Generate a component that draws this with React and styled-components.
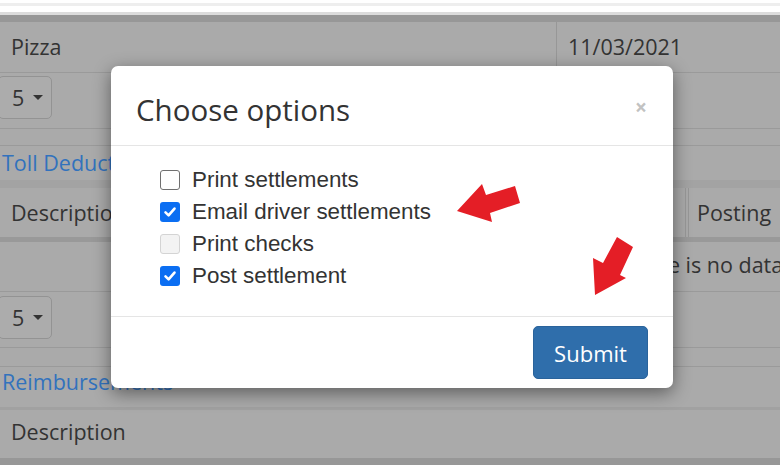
import React from 'react';
import styled, {createGlobalStyle} from 'styled-components';

const GlobalStyle = createGlobalStyle`
  html, body {
    margin: 0;
    padding: 0;
    width: 780px;
    height: 465px;
    overflow: hidden;
    background: #fff;
  }
  * {
    box-sizing: border-box;
  }
`;

const Screen = styled.div`
  position: relative;
  width: 780px;
  height: 465px;
  overflow: hidden;
  font-family: 'Open Sans', sans-serif;
  color: #333;
`;

const TopStrip = styled.div`
  height: 15px;
  background: linear-gradient(#fff 0 3px, #eee 3px 6px, #fff 6px 12px, #dcdcdc 12px 15px);
`;

const Dimmed = styled.div`
  background: #aaa;
  font-size: 21.5px;
  height: 450px;
`;

const Band = styled.div`
  height: ${props => props.height || '7px'};
  background: ${props => props.background || '#979797'};
`;

const Row = styled.div`
  display: flex;
  height: ${props => props.height};
  line-height: ${props => props.lineHeight || props.height};
  border-bottom: ${props => props.border || '1px solid #9a9a9a'};
`;

const Cell = styled.div`
  flex: ${props => props.flex || '1'};
  padding-left: ${props => props.padLeft || '11px'};
  margin-left: ${props => props.offset || '0'};
  border-right: ${props => (props.divider ? '1px solid #979797' : 'none')};
  border-left: ${props => (props.leftDivider ? '1px solid #979797' : 'none')};
  white-space: nowrap;
  overflow: hidden;
`;

const PagerRow = styled.div`
  height: 56px;
  padding-top: ${props => props.padTop || '3px'};
  border-bottom: 1px solid #9a9a9a;
`;

const PageSize = styled.div`
  display: flex;
  align-items: center;
  gap: 9px;
  width: 54px;
  height: 43px;
  margin-left: -2px;
  padding-left: 13px;
  border: 1px solid #939393;
  border-radius: 5px;
  background: #acacac;
  line-height: 1;
`;

const Caret = styled.span`
  width: 0;
  height: 0;
  border-top: 5px solid #333;
  border-left: 5px solid transparent;
  border-right: 5px solid transparent;
`;

const SectionTitle = styled.div`
  height: ${props => props.height};
  line-height: ${props => props.lineHeight};
  padding-left: 2px;
  color: #3272bd;
  white-space: nowrap;
`;

const Modal = styled.div`
  position: absolute;
  left: 111px;
  top: 66px;
  width: 562px;
  background: #fff;
  border-radius: 7px;
  box-shadow: 0 5px 18px rgba(0, 0, 0, 0.45);
  overflow: hidden;
`;

const ModalHeader = styled.div`
  display: flex;
  align-items: center;
  justify-content: space-between;
  padding: 24px 25px 15px 25px;
  border-bottom: 1px solid #e5e5e5;
`;

const Title = styled.h4`
  margin: 0;
  font-family: 'Open Sans', sans-serif;
  font-size: 29.5px;
  font-weight: 400;
  line-height: 40px;
  color: #333;
`;

const Close = styled.button`
  border: none;
  background: transparent;
  padding: 0;
  margin-top: -5px;
  margin-right: 1px;
  font-family: 'Open Sans', sans-serif;
  font-size: 21px;
  font-weight: 700;
  line-height: 1;
  color: #c2c2c2;
`;

const ModalBody = styled.div`
  padding: 18px 25px 24px 49px;
`;

const Option = styled.label`
  display: flex;
  align-items: center;
  gap: 12px;
  height: 32px;
  font-family: 'Liberation Sans', Arial, sans-serif;
  font-size: 22.4px;
  color: #333;
`;

const Box = styled.span`
  display: flex;
  align-items: center;
  justify-content: center;
  width: 20px;
  height: 20px;
  border-radius: 3px;
  border: ${props =>
    props.checked ? 'none' : props.disabled ? '1px solid #d4d4d4' : '1.5px solid #707070'};
  background: ${props => (props.checked ? '#0b6ef2' : props.disabled ? '#f3f3f3' : '#fff')};
`;

const ModalFooter = styled.div`
  display: flex;
  justify-content: flex-end;
  padding: 9px 25px;
  border-top: 1px solid #e5e5e5;
`;

const SubmitButton = styled.button`
  width: 115px;
  height: 53px;
  border: 1px solid #2a639b;
  border-radius: 5px;
  background: #2f6eab;
  color: #fff;
  font-family: 'Open Sans', sans-serif;
  font-size: 22px;
  padding: 0;
`;

const Annotation = styled.svg`
  position: absolute;
  left: 0;
  top: 0;
  pointer-events: none;
`;

const CheckBox = ({checked, disabled}) => (
  <Box checked={checked} disabled={disabled}>
    {checked && (
      <svg width='14' height='14' viewBox='0 0 14 14'>
        <path d='M2.5 7.4 L5.6 10.4 L11.5 3.6' fill='none' stroke='#fff' strokeWidth='2.6' strokeLinecap='round' strokeLinejoin='round' />
      </svg>
    )}
  </Box>
);

const options = [
  {label: 'Print settlements', checked: false},
  {label: 'Email driver settlements', checked: true},
  {label: 'Print checks', checked: false, disabled: true},
  {label: 'Post settlement', checked: true},
];

export default function App() {
  return (
    <Screen>
      <GlobalStyle />
      <TopStrip />
      <Dimmed>
        <Band />
        <Row height='51px' lineHeight='50px'>
          <Cell flex='0 0 557px' divider>Pizza</Cell>
          <Cell>11/03/2021</Cell>
        </Row>
        <PagerRow>
          <PageSize>
            5<Caret />
          </PageSize>
        </PagerRow>
        <Row height='17px' />
        <SectionTitle height='34px' lineHeight='34px'>Toll Deductions</SectionTitle>
        <Band height='8px' background='#a3a3a3' />
        <Row height='54px' lineHeight='49px' border='5px solid #999'>
          <Cell flex='0 0 686px' divider>Description</Cell>
          <Cell leftDivider padLeft='8px' offset='2px'>Posting</Cell>
        </Row>
        <Row height='50px' lineHeight='46px'>
          <Cell padLeft='622px'>There is no data</Cell>
        </Row>
        <PagerRow padTop='4px'>
          <PageSize>
            5<Caret />
          </PageSize>
        </PagerRow>
        <Row height='19px' />
        <SectionTitle height='40px' lineHeight='30px'>Reimbursements</SectionTitle>
        <Band height='3px' background='#a1a1a1' />
        <Row height='48px' lineHeight='44px' border='none'>
          <Cell>Description</Cell>
        </Row>
        <Band height='7px' background='#979797' />
      </Dimmed>

      <Modal>
        <ModalHeader>
          <Title>Choose options</Title>
          <Close>×</Close>
        </ModalHeader>
        <ModalBody>
          {options.map(o => (
            <Option key={o.label}>
              <CheckBox checked={o.checked} disabled={o.disabled} />
              {o.label}
            </Option>
          ))}
        </ModalBody>
        <ModalFooter>
          <SubmitButton>Submit</SubmitButton>
        </ModalFooter>
      </Modal>

      <Annotation width='780' height='465' viewBox='0 0 780 465'>
        <polygon points='457,211 482,184 486,195 515,186 520,203 490,213 492,222' fill='#e41e26' />
        <polygon points='595,295 593,258 603,263 617,237 633,247 620,275 626,278' fill='#e41e26' />
      </Annotation>
    </Screen>
  );
}
